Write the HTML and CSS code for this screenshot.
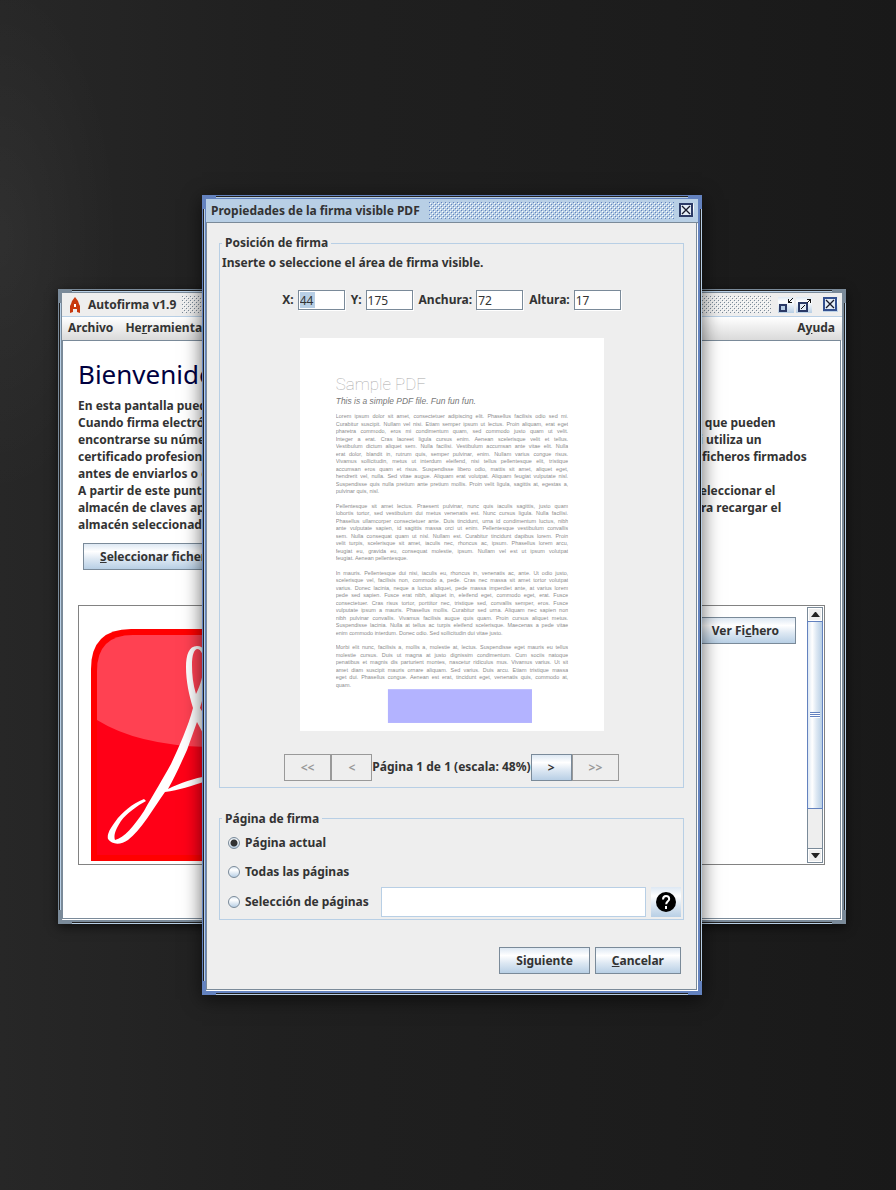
FILE: index.html
```html
<!DOCTYPE html>
<html lang="es">
<head>
    <meta charset="UTF-8">
    <meta name="viewport" content="width=device-width, initial-scale=1.0">
    <title>Autofirma v1.9</title>
    <link rel="stylesheet" href="styles.css">
</head>
<body>
    <div class="desktop">

        <!-- Main window -->
        <div class="window main-window">
            <header class="titlebar">
                <svg class="app-icon" width="12" height="18" viewBox="0 0 12 18">
                    <path d="M6 1 L9 5 L10 8 L11 10 L11 17 L8 16 L8 13 L4 13 L4 16 L1 17 L1 10 L2 8 L3 5 Z" fill="#c8390e"/>
                    <path d="M5 8h2v3h-2z" fill="#fff"/>
                </svg>
                <span class="title">Autofirma v1.9</span>
                <span class="bumps"></span>
                <button class="win-button" aria-label="Minimizar">
                    <svg width="16" height="16" viewBox="0 0 16 16" shape-rendering="crispEdges">
                        <rect x="2" y="8" width="6" height="6" fill="#b8cfe5" stroke="#2b3a66" stroke-width="2"/>
                        <path d="M14 1h1v1h-1zM13 2h1v1h-1zM12 3h1v1h-1zM10 2h1v4h-1zM10 5h4v1h-4zM11 4h1v1h-1z" fill="#111"/>
                    </svg>
                </button>
                <button class="win-button" aria-label="Maximizar">
                    <svg width="16" height="16" viewBox="0 0 16 16" shape-rendering="crispEdges">
                        <rect x="3" y="6" width="8" height="8" fill="#e4edf6" stroke="#2b3a66" stroke-width="2"/>
                        <path d="M11 2h4v1h-4zM14 2h1v4h-1zM13 3h1v1h-1zM12 4h1v1h-1zM11 5h1v1h-1zM8 8h1v1h-1zM7 9h1v1h-1zM6 10h1v1h-1zM5 11h1v1h-1z" fill="#111"/>
                    </svg>
                </button>
                <button class="win-button close" aria-label="Cerrar">
                    <svg width="15" height="15" viewBox="0 0 15 15">
                        <rect x="1" y="1" width="12" height="12" fill="#e4edf6" stroke="#33508f" stroke-width="2"/>
                        <path d="M3 3 L11 11 M11 3 L3 11" stroke="#16182a" stroke-width="1.3"/>
                    </svg>
                </button>
            </header>
            <nav class="menubar">
                <a href="#">Archivo</a>
                <a href="#">He<u>r</u>ramientas</a>
                <a href="#" class="help-menu">A<u>y</u>uda</a>
            </nav>
            <main class="panel welcome">
                <h1>Bienvenido a Autofirma</h1>
                <p>
                    En esta pantalla puede firmar ficheros que se encuentren en su equipo.<br>
                    Cuando firma electrónicamente un fichero, incorpora a este datos personales de su certificado, entre los que pueden<br>
                    encontrarse su número de DNI, nombre y apellidos, o incluso informaciones sobre el puesto de trabajo si utiliza un<br>
                    certificado profesional. Compruebe siempre las políticas de privacidad de todos sus destinatarios de sus ficheros firmados<br>
                    antes de enviarlos o compartirlos.<br>
                    A partir de este punto puede conectar o bien insertar su nuevo dispositivo de firma. En ese caso, podrá seleccionar el<br>
                    almacén de claves apropiado, desde el menú de herramientas, o bien pulsar el botón de actualización para recargar el<br>
                    almacén seleccionado actualmente.
                </p>
                <button class="btn select-files"><u>S</u>eleccionar ficheros a firmar</button>
                <div class="file-list">
                    <div class="file-row">
                        <svg class="pdf-icon" width="232" height="232" viewBox="0 0 232 232">
                            <path d="M0 232V40Q0 0 40 0H192Q232 0 232 40V232Z" fill="#f00"/>
                            <path d="M6 226V42Q6 6 42 6H190Q226 6 226 42V226Z" fill="#ff0017"/>
                            <path d="M6 91V42Q6 6 42 6H190Q226 6 226 42V91Q186 118 116 118Q46 116 6 91Z" fill="#ff4152"/>
                            <path fill="#fff" fill-rule="evenodd" d="M106 17C98 17 95 26 95 38C95 52 98 66 102 79C97 98 88 118 80 135C73 148 63 164 53 182C43 197 33 209 24 211C22 206 26 198 30 192C36 184 46 177 55 172L53 170C41 175 31 183 24 193C18 201 16 206 17 210C21 216 30 216 37 211C50 201 62 180 74 163C88 161 100 157 116 152V147C104 149 89 154 77 160C84 148 90 134 96 121L106 93L116 112V90L109 79C113 66 117 50 117 36C117 24 113 17 106 17ZM106 20C110 20 113 26 113 36C112 48 109 57 105 65C102 55 101 46 101 36C101 26 103 21 106 20Z"/>
                        </svg>
                        <button class="btn">Ver Fi<u>c</u>hero</button>
                    </div>
                    <div class="scrollbar">
                        <button class="arrow" aria-label="Subir"><svg width="9" height="5" viewBox="0 0 9 5"><path d="M0 5L4 0H5L9 5Z" fill="#222"/></svg></button>
                        <div class="track"><div class="thumb"><span class="grip"></span></div></div>
                        <button class="arrow" aria-label="Bajar"><svg width="9" height="5" viewBox="0 0 9 5"><path d="M0 0L4 5H5L9 0Z" fill="#222"/></svg></button>
                    </div>
                </div>
            </main>
        </div>

        <!-- Signature properties dialog -->
        <div class="window dialog" role="dialog" aria-labelledby="dialogTitle">
            <header class="titlebar">
                <span class="title" id="dialogTitle">Propiedades de la firma visible PDF</span>
                <span class="bumps"></span>
                <button class="win-button close" aria-label="Cerrar">
                    <svg width="15" height="15" viewBox="0 0 15 15">
                        <rect x="1" y="1" width="12" height="12" fill="#e4edf6" stroke="#2b3a66" stroke-width="2"/>
                        <path d="M3 3 L11 11 M11 3 L3 11" stroke="#16182a" stroke-width="1.3"/>
                    </svg>
                </button>
            </header>
            <form class="panel">
                <fieldset class="position">
                    <legend>Posición de firma</legend>
                    <p>Inserte o seleccione el área de firma visible.</p>
                    <div class="coords">
                        <label for="posX">X:</label>
                        <span class="field"><input type="text" id="posX" class="selected" value="44"></span>
                        <label for="posY">Y:</label>
                        <span class="field"><input type="text" id="posY" value="175"></span>
                        <label for="width">Anchura:</label>
                        <span class="field"><input type="text" id="width" value="72"></span>
                        <label for="height">Altura:</label>
                        <span class="field"><input type="text" id="height" value="17"></span>
                    </div>
                    <svg class="preview" viewBox="0 0 612 791">
                        <rect width="612" height="791" fill="#fff"/>
                        <foreignObject x="72" y="68" width="468" height="660">
                            <div class="page">
                                <div class="page-title">Sample PDF</div>
                                <div class="page-subtitle">This is a simple PDF file. Fun fun fun.</div>
                                <p>
                                    <span>Lorem ipsum dolor sit amet, consectetuer adipiscing elit. Phasellus facilisis odio sed mi.</span>
                                    <span>Curabitur suscipit. Nullam vel nisi. Etiam semper ipsum ut lectus. Proin aliquam, erat eget</span>
                                    <span>pharetra commodo, eros mi condimentum quam, sed commodo justo quam ut velit.</span>
                                    <span>Integer a erat. Cras laoreet ligula cursus enim. Aenean scelerisque velit et tellus.</span>
                                    <span>Vestibulum dictum aliquet sem. Nulla facilisi. Vestibulum accumsan ante vitae elit. Nulla</span>
                                    <span>erat dolor, blandit in, rutrum quis, semper pulvinar, enim. Nullam varius congue risus.</span>
                                    <span>Vivamus sollicitudin, metus ut interdum eleifend, nisi tellus pellentesque elit, tristique</span>
                                    <span>accumsan eros quam et risus. Suspendisse libero odio, mattis sit amet, aliquet eget,</span>
                                    <span>hendrerit vel, nulla. Sed vitae augue. Aliquam erat volutpat. Aliquam feugiat vulputate nisl.</span>
                                    <span>Suspendisse quis nulla pretium ante pretium mollis. Proin velit ligula, sagittis at, egestas a,</span>
                                    <span>pulvinar quis, nisl.</span>
                                </p>
                                <p>
                                    <span>Pellentesque sit amet lectus. Praesent pulvinar, nunc quis iaculis sagittis, justo quam</span>
                                    <span>lobortis tortor, sed vestibulum dui metus venenatis est. Nunc cursus ligula. Nulla facilisi.</span>
                                    <span>Phasellus ullamcorper consectetuer ante. Duis tincidunt, urna id condimentum luctus, nibh</span>
                                    <span>ante vulputate sapien, id sagittis massa orci ut enim. Pellentesque vestibulum convallis</span>
                                    <span>sem. Nulla consequat quam ut nisl. Nullam est. Curabitur tincidunt dapibus lorem. Proin</span>
                                    <span>velit turpis, scelerisque sit amet, iaculis nec, rhoncus ac, ipsum. Phasellus lorem arcu,</span>
                                    <span>feugiat eu, gravida eu, consequat molestie, ipsum. Nullam vel est ut ipsum volutpat</span>
                                    <span>feugiat. Aenean pellentesque.</span>
                                </p>
                                <p>
                                    <span>In mauris. Pellentesque dui nisi, iaculis eu, rhoncus in, venenatis ac, ante. Ut odio justo,</span>
                                    <span>scelerisque vel, facilisis non, commodo a, pede. Cras nec massa sit amet tortor volutpat</span>
                                    <span>varius. Donec lacinia, neque a luctus aliquet, pede massa imperdiet ante, at varius lorem</span>
                                    <span>pede sed sapien. Fusce erat nibh, aliquet in, eleifend eget, commodo eget, erat. Fusce</span>
                                    <span>consectetuer. Cras risus tortor, porttitor nec, tristique sed, convallis semper, eros. Fusce</span>
                                    <span>vulputate ipsum a mauris. Phasellus mollis. Curabitur sed urna. Aliquam nec sapien non</span>
                                    <span>nibh pulvinar convallis. Vivamus facilisis augue quis quam. Proin cursus aliquet metus.</span>
                                    <span>Suspendisse lacinia. Nulla at tellus ac turpis eleifend scelerisque. Maecenas a pede vitae</span>
                                    <span>enim commodo interdum. Donec odio. Sed sollicitudin dui vitae justo.</span>
                                </p>
                                <p>
                                    <span>Morbi elit nunc, facilisis a, mollis a, molestie at, lectus. Suspendisse eget mauris eu tellus</span>
                                    <span>molestie cursus. Duis ut magna at justo dignissim condimentum. Cum sociis natoque</span>
                                    <span>penatibus et magnis dis parturient montes, nascetur ridiculus mus. Vivamus varius. Ut sit</span>
                                    <span>amet diam suscipit mauris ornare aliquam. Sed varius. Duis arcu. Etiam tristique massa</span>
                                    <span>eget dui. Phasellus congue. Aenean est erat, tincidunt eget, venenatis quis, commodo at,</span>
                                    <span>quam.</span>
                                </p>
                            </div>
                        </foreignObject>
                        <rect x="177" y="707" width="290" height="68" fill="#b3b3ff"/>
                    </svg>
                    <div class="pager">
                        <button type="button" class="btn" disabled>&lt;&lt;</button>
                        <button type="button" class="btn" disabled>&lt;</button>
                        <span>Página 1 de 1 (escala: 48%)</span>
                        <button type="button" class="btn">&gt;</button>
                        <button type="button" class="btn" disabled>&gt;&gt;</button>
                    </div>
                </fieldset>

                <fieldset class="pages">
                    <legend>Página de firma</legend>
                    <div class="option">
                        <input type="radio" name="page" id="pageCurrent" checked>
                        <label for="pageCurrent">Página actual</label>
                    </div>
                    <div class="option">
                        <input type="radio" name="page" id="pageAll">
                        <label for="pageAll">Todas las páginas</label>
                    </div>
                    <div class="option">
                        <input type="radio" name="page" id="pageRange">
                        <label for="pageRange">Selección de páginas</label>
                        <input type="text" class="range" aria-label="Páginas">
                        <button type="button" class="help" aria-label="Ayuda">
                            <svg width="20" height="20" viewBox="0 0 20 20">
                                <circle cx="10" cy="10" r="10" fill="#000"/>
                                <path d="M7 7.500C7 5 8.300 4 10 4C11.900 4 13.200 5.200 13.200 7C13.200 9.300 10.200 9.400 10.200 12.300" fill="none" stroke="#fff" stroke-width="2"/>
                                <rect x="9" y="14" width="2" height="3" fill="#fff"/>
                            </svg>
                        </button>
                    </div>
                </fieldset>

                <div class="actions">
                    <button type="button" class="btn">Siguiente</button>
                    <button type="button" class="btn"><u>C</u>ancelar</button>
                </div>
            </form>
        </div>
    </div>
</body>
</html>
```
FILE: styles.css
```css
* {
  box-sizing: border-box;
}

body {
  margin: 0;
  font-family: "Noto Sans", sans-serif;
  font-size: 12px;
  font-weight: bold;
  line-height: 16px;
  color: #333;
}

h1, p, fieldset {
  margin: 0;
}

button, input {
  font: inherit;
  color: inherit;
}

.desktop {
  position: relative;
  min-height: 100vh;
  overflow: hidden;
  background:
    radial-gradient(ellipse 120px 260px at 0 20%, rgba(255, 255, 255, 0.04), transparent),
    linear-gradient(90deg, #272727 0%, #202020 30%, #1c1c1c 75%, #191919 100%);
}

/* Windows */
.window {
  --frame: #7a8a99;
  --frame-light: #b8cfe5;
  position: absolute;
  border: 4px solid var(--frame);
  background: #eee;
}

/* etched lines that run along the frame between the corners */
.window::before,
.window::after {
  content: "";
  position: absolute;
  pointer-events: none;
}

.window::before {
  inset: 10px -3px;
  border: solid #222;
  border-width: 0 1px;
  box-shadow: inset 1px 0 var(--frame-light), 1px 0 var(--frame-light);
}

.window::after {
  inset: -3px 10px;
  border: solid #222;
  border-width: 1px 0;
  box-shadow: inset 0 1px var(--frame-light), 0 1px var(--frame-light);
}

.main-window {
  left: 58px;
  right: 50px;
  top: 289px;
  box-shadow: 0 3px 10px rgba(0, 0, 0, 0.6);
}

.dialog {
  --frame: #6382bf;
  left: 202px;
  right: 194px;
  top: 195px;
  box-shadow: 0 4px 18px rgba(0, 0, 0, 0.6);
}

/* Title bar */
.titlebar {
  display: flex;
  align-items: center;
  height: 24px;
  padding: 0 4px 0 5px;
  border-bottom: 1px solid #b8cfe5;
}

.app-icon {
  margin: 0 7px 0 2px;
}

.dialog .titlebar {
  background: #b8cfe5;
  border-bottom-color: #7a8a99;
}

.bumps {
  flex: 1;
  height: 17px;
  margin: 0 5px 0 6px;
  background: url("data:image/svg+xml,%3Csvg xmlns='http://www.w3.org/2000/svg' width='4' height='4' shape-rendering='crispEdges'%3E%3Cpath d='M0 0h1v1h-1zM2 2h1v1h-1z' fill='%237a8a99'/%3E%3Cpath d='M1 1h1v1h-1zM3 3h1v1h-1z' fill='%23fff'/%3E%3C/svg%3E");
}

.dialog .bumps {
  margin-left: 9px;
  background-image: url("data:image/svg+xml,%3Csvg xmlns='http://www.w3.org/2000/svg' width='4' height='4' shape-rendering='crispEdges'%3E%3Cpath d='M0 0h1v1h-1zM2 2h1v1h-1z' fill='%236382bf'/%3E%3Cpath d='M1 1h1v1h-1zM3 3h1v1h-1z' fill='%23fff'/%3E%3C/svg%3E");
}

.win-button {
  display: flex;
  margin: 0 0 0 2px;
  padding: 0;
  border: 0;
  background: linear-gradient(#dde8f3, #fff 30%, #b8cfe5);
}

.win-button.close {
  margin-left: 11px;
}

.dialog .win-button.close {
  margin-left: 0;
}

/* Menu */
.menubar {
  display: flex;
  gap: 12px;
  height: 23px;
  padding: 3px 7px 3px 6px;
  background: linear-gradient(#fff, #dadada);
}

.menubar a {
  color: inherit;
  text-decoration: none;
}

.menubar .help-menu {
  margin-left: auto;
}

.panel {
  margin: 0 1px 1px 0;
  border: 1px solid #7a8a99;
  box-shadow: 1px 1px 0 #fff;
}

.dialog .panel {
  border-top: 0;
}

/* Welcome panel */
.welcome {
  padding: 17px 15px 53px;
  background: #fff;
}

.welcome h1 {
  margin-bottom: 7px;
  font-size: 26px;
  font-weight: normal;
  line-height: 32px;
  color: #000040;
}

.welcome p {
  line-height: 17px;
  white-space: nowrap;
}

.btn {
  height: 27px;
  padding: 0 16px;
  border: 1px solid #7a8a99;
  background: linear-gradient(#dde8f3, #fff 30%, #dde8f3 60%, #b8cfe5);
}

.dialog .btn {
  padding-top: 1px;
}

.btn:disabled {
  border-color: #999;
  background: none;
  color: #999;
}

.select-files {
  display: block;
  margin: 10px 0 35px 5px;
}

.file-list {
  display: flex;
  height: 260px;
  border: 1px solid #828282;
  padding: 1px 1px 1px 0;
  overflow: hidden;
}

.file-row {
  flex: 1;
  display: flex;
  justify-content: space-between;
  align-items: flex-start;
  padding: 10px 11px 0 12px;
}

.pdf-icon {
  margin-top: 12px;
}

.scrollbar {
  display: flex;
  flex-direction: column;
  width: 16px;
  border: 1px solid #7a8a99;
  background: #eee;
}

.arrow {
  display: flex;
  align-items: center;
  justify-content: center;
  height: 13px;
  padding: 0;
  border: 1px solid #fff;
  background: #eee;
}

.track {
  flex: 1;
  border-bottom: 1px solid #7a8a99;
}

.thumb {
  display: flex;
  align-items: center;
  justify-content: center;
  height: 83%;
  margin: 0 -1px;
  border: 1px solid #6382bf;
  background: linear-gradient(90deg, #dde8f3, #fff 30%, #dde8f3 60%, #b8cfe5);
}

.grip {
  width: 10px;
  height: 6px;
  background: repeating-linear-gradient(#6382bf 0 1px, #fff 1px 2px);
}

/* Dialog */
.dialog .panel {
  padding: 12px 12px 15px;
}

fieldset {
  min-width: 0;
  padding: 0 2px;
  border: 1px solid #b8cfe5;
}

legend {
  padding: 0 3px;
}

.position {
  display: flex;
  flex-direction: column;
  padding: 4px 2px 6px;
}

.coords {
  display: flex;
  justify-content: center;
  align-items: center;
  margin: 19px 0 28px;
}

.field {
  margin: 0 6px 0 4px;
}

.field:last-child {
  margin-right: 0;
}

.field input {
  display: block;
  width: 47px;
  height: 20px;
  padding: 0 1px;
  border: 1px solid #7a8a99;
  background: #fff;
  font-weight: normal;
  box-shadow: 1px 1px 0 #fff;
}

.field .selected {
  background: linear-gradient(#b8cfe5, #b8cfe5) 1px 1px / 15px 16px no-repeat #fff;
}

.preview {
  width: 304px;
  max-width: 100%;
  margin: 0 auto;
}

.page {
  font-family: "Liberation Sans", sans-serif;
  font-size: 11px;
  font-weight: normal;
  line-height: 15px;
  color: #8c8c8c;
}

.page-title {
  font-family: Roboto, sans-serif;
  font-size: 34px;
  font-weight: 100;
  line-height: 50px;
  color: #aaa;
}

.page-subtitle {
  font-size: 17px;
  font-style: italic;
  line-height: 18px;
  color: #777;
}

.page p {
  margin: 15px 0 0;
}

.page p span {
  display: block;
  text-align-last: justify;
  white-space: nowrap;
}

.page p span:last-child {
  text-align-last: left;
}

.pager {
  display: flex;
  justify-content: center;
  align-items: center;
  margin-top: 23px;
}

.pages {
  margin-top: 23px;
  padding-top: 2px;
  padding-bottom: 2px;
}

.option {
  display: flex;
  align-items: center;
  gap: 5px;
  height: 29px;
  padding-left: 6px;
}

.option:last-child {
  height: 30px;
}

input[type="radio"] {
  appearance: none;
  width: 12px;
  height: 12px;
  margin: 0;
  border: 1px solid #7a8a99;
  border-radius: 50%;
  background: linear-gradient(#dde8f3, #fff 30%, #b8cfe5);
}

input[type="radio"]:checked {
  background: radial-gradient(circle, #333 3px, transparent 4px), linear-gradient(#dde8f3, #fff 30%, #b8cfe5);
}

.range {
  flex: 1;
  min-width: 0;
  height: 30px;
  margin-left: 7px;
  border: 1px solid #b8cfe5;
  background: #fff;
}

.help {
  display: flex;
  align-items: center;
  justify-content: center;
  width: 30px;
  height: 30px;
  padding: 0;
  border: 0;
  background: linear-gradient(#dde8f3, #fff 30%, #dde8f3 60%, #b8cfe5);
}

.actions {
  display: flex;
  justify-content: flex-end;
  gap: 5px;
  margin-top: 27px;
  padding-right: 3px;
}
```
